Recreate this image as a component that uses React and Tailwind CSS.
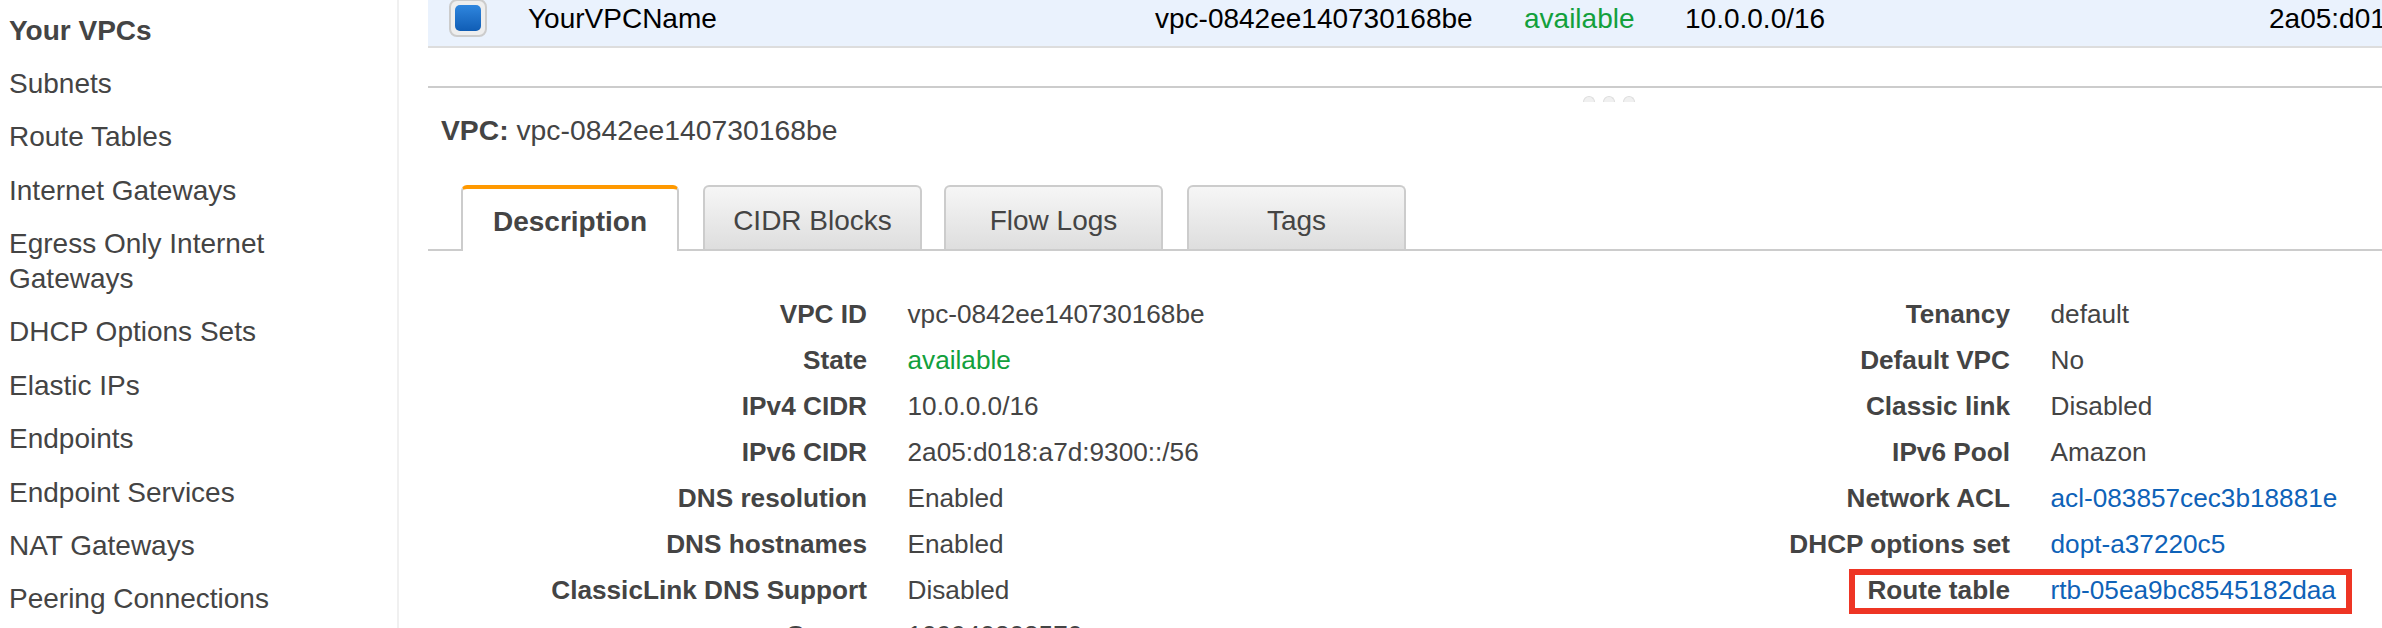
import React from 'react';

const navItems = [
  'Your VPCs',
  'Subnets',
  'Route Tables',
  'Internet Gateways',
  'Egress Only Internet Gateways',
  'DHCP Options Sets',
  'Elastic IPs',
  'Endpoints',
  'Endpoint Services',
  'NAT Gateways',
  'Peering Connections',
];

const leftRows = [
  { label: 'VPC ID', value: 'vpc-0842ee140730168be' },
  { label: 'State', value: 'available', color: 'text-[#12a03c]' },
  { label: 'IPv4 CIDR', value: '10.0.0.0/16' },
  { label: 'IPv6 CIDR', value: '2a05:d018:a7d:9300::/56' },
  { label: 'DNS resolution', value: 'Enabled' },
  { label: 'DNS hostnames', value: 'Enabled' },
  { label: 'ClassicLink DNS Support', value: 'Disabled' },
  { label: 'Owner', value: '109940808570', offset: '-mt-[1px]' },
];

const rightRows = [
  { label: 'Tenancy', value: 'default' },
  { label: 'Default VPC', value: 'No' },
  { label: 'Classic link', value: 'Disabled' },
  { label: 'IPv6 Pool', value: 'Amazon' },
  { label: 'Network ACL', value: 'acl-083857cec3b18881e', color: 'text-[#0e62b8]' },
  { label: 'DHCP options set', value: 'dopt-a37220c5', color: 'text-[#0e62b8]' },
  { label: 'Route table', value: 'rtb-05ea9bc8545182daa', color: 'text-[#0e62b8]' },
];

const DetailColumn = ({ rows, labelWidth, width }) => (
  <div className={`${width} shrink-0`}>
    {rows.map((row) => (
      <div key={row.label} className={`flex h-[46px] items-center gap-[40.5px] text-[26.2px] whitespace-nowrap ${row.offset || ''}`}>
        <div className={`${labelWidth} shrink-0 text-right font-bold text-[#444]`}>{row.label}</div>
        <div className={row.color || 'text-[#444]'}>{row.value}</div>
      </div>
    ))}
  </div>
);

const App = () => {
  return (
    <div className="flex h-[628px] w-[2382px] overflow-hidden bg-white font-['Liberation_Sans',Arial,sans-serif]">
      {/* Sidebar */}
      <div className="w-[399px] shrink-0 border-r-2 border-[#f0f0f0] pl-[9px] pt-[12.5px] text-[28px] leading-[35px] text-[#444]">
        {navItems.map((item, i) => (
          <div key={item} className={`mb-[18.4px] w-[290px] ${i === 0 ? 'font-bold' : ''}`}>
            {item}
          </div>
        ))}
      </div>

      {/* Main panel */}
      <div className="relative ml-[29px] min-w-0 flex-1 overflow-hidden">
        {/* Selected row */}
        <div className="flex h-[48px] items-center border-b-2 border-[#ddd] bg-[#eaf2fd] pb-[8px] text-[28px] text-black whitespace-nowrap">
          <div className="ml-[21px] -mt-[2px] flex h-[38px] w-[38px] shrink-0 items-center justify-center rounded-[8px] border-2 border-[#ccc] bg-[#eee]">
            <div className="h-[26px] w-[26px] rounded-[5px] bg-gradient-to-b from-[#2f86de] to-[#0f5db5]"></div>
          </div>
          <div className="ml-[41px] w-[627px] shrink-0">YourVPCName</div>
          <div className="w-[369px] shrink-0">vpc-0842ee140730168be</div>
          <div className="w-[161px] shrink-0 text-[#12a03c]">available</div>
          <div className="w-[584px] shrink-0">10.0.0.0/16</div>
          <div>2a05:d018:a7d:9300::/56</div>
        </div>

        {/* Resize handle */}
        <div className="mt-[38px] h-[2px] bg-[#ccc]"></div>
        <div className="ml-[1155px] mt-[8px] flex h-[6px] gap-[8px]">
          <div className="h-[6px] w-[12px] rounded-t-full border border-b-0 border-[#ddd] bg-[#f0f0f0]"></div>
          <div className="h-[6px] w-[12px] rounded-t-full border border-b-0 border-[#ddd] bg-[#f0f0f0]"></div>
          <div className="h-[6px] w-[12px] rounded-t-full border border-b-0 border-[#ddd] bg-[#f0f0f0]"></div>
        </div>

        {/* Title */}
        <div className="ml-[13px] mt-[7px] h-[42px] text-[28.3px] leading-[42px] text-[#444]">
          <span className="font-bold">VPC:</span> vpc-0842ee140730168be
        </div>

        {/* Tabs */}
        <div className="mt-[34px] flex h-[66px] border-b-2 border-[#ccc] pl-[33px] text-[28px] text-[#444]">
          <div className="z-10 -mb-[2px] flex h-[66px] w-[218px] items-center justify-center rounded-t-[6px] border-x-2 border-t-4 border-x-[#ccc] border-t-[#f90] bg-white pt-[3px] font-bold">
            Description
          </div>
          <div className="ml-[24px] flex h-[64px] w-[219px] items-center justify-center rounded-t-[6px] border-x-2 border-t-2 border-[#ccc] bg-gradient-to-b from-[#f6f6f6] to-[#dedede] pt-[5px]">
            CIDR Blocks
          </div>
          <div className="ml-[22px] flex h-[64px] w-[219px] items-center justify-center rounded-t-[6px] border-x-2 border-t-2 border-[#ccc] bg-gradient-to-b from-[#f6f6f6] to-[#dedede] pt-[5px]">
            Flow Logs
          </div>
          <div className="ml-[24px] flex h-[64px] w-[219px] items-center justify-center rounded-t-[6px] border-x-2 border-t-2 border-[#ccc] bg-gradient-to-b from-[#f6f6f6] to-[#dedede] pt-[5px]">
            Tags
          </div>
        </div>

        {/* Description */}
        <div className="mt-[41px] flex">
          <DetailColumn rows={leftRows} labelWidth="w-[439px]" width="w-[1143px]" />
          <DetailColumn rows={rightRows} labelWidth="w-[439px]" width="w-[800px]" />
        </div>

        {/* Highlight */}
        <div className="absolute left-[1421px] top-[569px] h-[45px] w-[503px] border-[6px] border-[#ee3524]"></div>
      </div>
    </div>
  );
};

export default App;
